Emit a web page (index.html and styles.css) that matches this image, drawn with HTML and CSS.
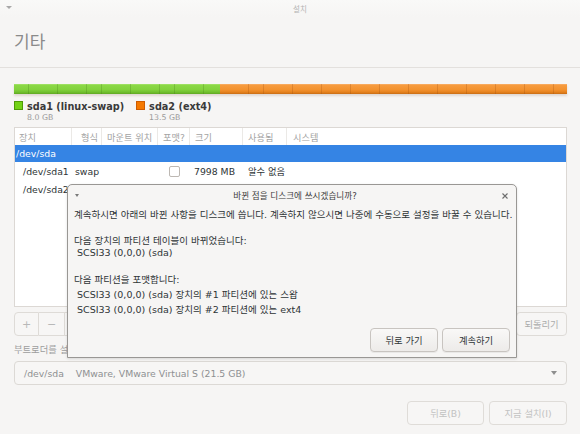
FILE: index.html
```html
<!DOCTYPE html>
<html lang="ko">
<head>
<meta charset="utf-8">
<link rel="stylesheet" href="styles.css">
</head>
<body>
<div class="window">
  <div class="titlebar"><span class="wtri"></span><span class="wtitle">설치</span></div>
  <div class="header"><h1 class="heading">기타</h1></div>
  <div class="content">
    <div class="pbar">
      <div class="seg swap"></div>
      <div class="seg ext4"></div>
    </div>
    <div class="legend">
      <div class="litem">
        <span class="sq green"></span>
        <div class="ltext"><div class="lname">sda1 (linux-swap)</div><div class="lsize">8.0 GB</div></div>
      </div>
      <div class="litem">
        <span class="sq orange"></span>
        <div class="ltext"><div class="lname">sda2 (ext4)</div><div class="lsize">13.5 GB</div></div>
      </div>
    </div>
    <div class="table">
      <div class="row head">
        <div class="c c1 h">장치</div>
        <div class="c c2 h">형식</div>
        <div class="c c3 h">마운트 위치</div>
        <div class="c c4 h">포맷?</div>
        <div class="c c5 h">크기</div>
        <div class="c c6 h">사용됨</div>
        <div class="c c7 h last">시스템</div>
      </div>
      <div class="row sel"><div class="c dev0">/dev/sda</div></div>
      <div class="row data">
        <div class="c c1 dev">/dev/sda1</div>
        <div class="c c2 d2">swap</div>
        <div class="c c3"></div>
        <div class="c c4 d4"><span class="chk"></span></div>
        <div class="c c5 d5">7998 MB</div>
        <div class="c c6 d6">알수 없음</div>
        <div class="c c7"></div>
      </div>
      <div class="row data">
        <div class="c c1 dev">/dev/sda2</div>
      </div>
    </div>
    <div class="toolbar">
      <div class="linked">
        <div class="tbtn plus">+</div>
        <div class="tbtn minus">−</div>
        <div class="tbtn change"></div>
      </div>
      <div class="spacer"></div>
      <div class="tbtn revert">되돌리기</div>
    </div>
    <div class="bootlabel">부트로더를 설</div>
    <div class="combo">
      <span class="cdev">/dev/sda</span><span class="cname">VMware, VMware Virtual S (21.5 GB)</span>
      <span class="carrow"></span>
    </div>
    <div class="footer">
      <div class="fbtn back">뒤로(B)</div>
      <div class="fbtn install">지금 설치(I)</div>
    </div>
  </div>
</div>

<div class="dialog">
  <div class="dtitlebar">
    <span class="dtri"></span>
    <span class="dtitle">바뀐 점을 디스크에 쓰시겠습니까?</span>
    <svg class="dclose" width="6" height="6" viewBox="0 0 6 6"><path d="M0.5 0.5L5.5 5.5M5.5 0.5L0.5 5.5" stroke="#6d6d6d" stroke-width="1.1" fill="none"/></svg>
  </div>
  <div class="dbody">
    <p class="p1">계속하시면 아래의 바뀐 사항을 디스크에 씁니다. 계속하지 않으시면 나중에 수동으로 설정을 바꿀 수 있습니다.</p>
    <p class="p2">다음 장치의 파티션 테이블이 바뀌었습니다:<br>&nbsp;SCSI33 (0,0,0) (sda)</p>
    <p class="p3">다음 파티션을 포맷합니다:<br>&nbsp;SCSI33 (0,0,0) (sda) 장치의 #1 파티션에 있는 스왑<br>&nbsp;SCSI33 (0,0,0) (sda) 장치의 #2 파티션에 있는 ext4</p>
  </div>
  <div class="dactions">
    <div class="dbtn">뒤로 가기</div>
    <div class="dbtn">계속하기</div>
  </div>
</div>
</body>
</html>
```

FILE: styles.css
```css
* { box-sizing: border-box; }
html, body {
  margin: 0;
  padding: 0;
  width: 580px;
  height: 434px;
  overflow: hidden;
  background: #f6f5f4;
  font-family: "DejaVu Sans", "Noto Sans CJK KR", sans-serif;
  color: #2e3436;
}
.window {
  width: 580px;
  height: 434px;
  display: flex;
  flex-direction: column;
}
.titlebar {
  height: 17px;
  display: flex;
  align-items: center;
  position: relative;
  background: linear-gradient(#f9f9f8, #f6f5f4);
}
.wtri {
  width: 0; height: 0;
  margin-left: 6px;
  margin-top: -2px;
  border-left: 3px solid transparent;
  border-right: 3px solid transparent;
  border-top: 3px solid #a8a8a8;
}
.wtitle {
  flex: 1;
  text-align: center;
  padding-left: 8px;
  font-size: 7.5px;
  color: #b3b3b3;
  margin-top: -1px;
}
.header {
  height: 51px;
  border-bottom: 1px solid #e3e0dd;
  padding: 14px 0 0 14px;
}
.heading {
  margin: 0;
  font-size: 17px;
  line-height: 20px;
  font-weight: normal;
  color: #8a8a8a;
  font-family: "Noto Sans CJK KR", sans-serif;
}
.content {
  padding: 0 13px 0 14px;
  display: flex;
  flex-direction: column;
}
.pbar {
  margin-top: 16px;
  height: 10px;
  display: flex;
  box-shadow: 0 2px 2px rgba(120, 90, 60, 0.18);
}
.seg { height: 10px; }
.swap {
  width: 206px;
  background:
    repeating-linear-gradient(90deg, transparent 0 14px, rgba(60, 110, 20, 0.25) 14px 14.6px),
    linear-gradient(#a6e46c 0, #8bd846 15%, #82d23d 55%, #72c22f 80%, #5fa823 100%);
}
.ext4 {
  flex: 1;
  background:
    repeating-linear-gradient(90deg, transparent 0 14px, rgba(150, 70, 10, 0.25) 14px 14.5px),
    linear-gradient(#f9b06a 0, #f69b3e 15%, #f3922f 55%, #e7831e 80%, #c86c14 100%);
}
.legend {
  margin-top: 6.5px;
  display: flex;
  gap: 12px;
  height: 22px;
}
.litem { display: flex; gap: 4px; }
.sq {
  width: 9px; height: 9px;
  margin-top: 0.5px;
  border: 1px solid;
  flex: none;
}
.green { background: #73d216; border-color: #4e9a06; }
.orange { background: #f57900; border-color: #ce5c00; }
.lname {
  font-size: 9.7px;
  font-weight: bold;
  line-height: 11px;
  color: #3a3a3a;
  white-space: nowrap;
}
.lsize {
  font-size: 7.8px;
  line-height: 11px;
  color: #9a9a9a;
}
.table {
  margin-top: 4.5px;
  height: 180px;
  background: #fff;
  border: 1px solid #dcd8d4;
}
.row {
  display: grid;
  grid-template-columns: 57px 30px 56px 32px 53px 44px 1fr;
  align-items: center;
  font-size: 9.3px;
  white-space: nowrap;
}
.head { height: 17px; }
.c { height: 100%; display: flex; align-items: center; }
.h {
  color: #a3a3a3;
  font-size: 9.2px;
  border-right: 1px solid #ebe9e6;
  padding-left: 4px;
}
.head .c2 { padding-left: 9px; }
.head .c3 { padding-left: 5px; }
.head .c4 { padding-left: 5px; }
.head .c5 { padding-left: 5px; }
.head .c6 { padding-left: 5px; }
.head .c7 { padding-left: 6px; }
.h.last { border-right: none; }
.sel {
  height: 17px;
  background: #3584e4;
  color: #fff;
  display: flex;
}
.dev0 { padding-left: 1px; }
.data { height: 18px; }
.dev { padding-left: 8px; }
.d2 { padding-left: 3px; }
.d4 { justify-content: center; padding-left: 1px; }
.d5 { padding-left: 4px; }
.d6 { padding-left: 5px; }
.chk {
  width: 11px; height: 11px;
  border: 1px solid #bdb8b3;
  border-radius: 2px;
  background: #fff;
}
.toolbar {
  margin-top: 5px;
  height: 24px;
  display: flex;
}
.linked { display: flex; }
.spacer { flex: 1; }
.tbtn {
  height: 24px;
  border: 1px solid #dedbd7;
  background: #f7f6f5;
  color: #b8b8b8;
  font-size: 9.3px;
  display: flex;
  align-items: center;
  justify-content: center;
}
.plus { width: 25px; border-radius: 4px 0 0 4px; font-size: 11px; }
.minus { width: 26px; border-left: none; font-size: 11px; }
.change { width: 50px; border-left: none; border-radius: 0 4px 4px 0; }
.revert { width: 51px; border-radius: 4px; color: #ababab; }
.bootlabel {
  margin-top: 8px;
  font-size: 9.3px;
  line-height: 12px;
  color: #9d9d9d;
}
.combo {
  margin-top: 5px;
  height: 24px;
  border: 1px solid #dcd9d5;
  border-radius: 4px;
  background: #f7f6f5;
  display: flex;
  align-items: center;
  padding-left: 9px;
  font-size: 9.3px;
  color: #8e9092;
  white-space: nowrap;
}
.cdev { margin-right: 12px; }
.cname { flex: 1; }
.carrow {
  width: 0; height: 0;
  margin-right: 9px;
  border-left: 3.5px solid transparent;
  border-right: 3.5px solid transparent;
  border-top: 4px solid #8e8e8e;
}
.footer {
  margin-top: 16px;
  display: flex;
  justify-content: flex-end;
  gap: 5px;
}
.fbtn {
  height: 24px;
  border: 1px solid #dfdcd8;
  border-radius: 4px;
  background: #f7f6f5;
  color: #c2c2c2;
  font-size: 9.3px;
  display: flex;
  align-items: center;
  justify-content: center;
}
.back { width: 77px; }
.install { width: 78px; }

/* dialog overlay */
.dialog {
  position: absolute;
  left: 67px;
  top: 184px;
  width: 450px;
  height: 174px;
  background: #f6f5f4;
  border: 1px solid #999794;
  border-radius: 5px 5px 0 0;
  display: flex;
  flex-direction: column;
  box-shadow: 0 1px 3px rgba(0,0,0,0.12);
}
.dtitlebar {
  height: 19px;
  display: flex;
  align-items: center;
  position: relative;
}
.dtri {
  width: 0; height: 0;
  margin-left: 7px;
  margin-top: 1px;
  border-left: 2.5px solid transparent;
  border-right: 2.5px solid transparent;
  border-top: 3px solid #7a7a7a;
}
.dtitle {
  flex: 1;
  text-align: center;
  padding-right: 5px;
  font-size: 8.6px;
  color: #3c3c3c;
  margin-top: 1px;
}
.dclose {
  position: absolute;
  right: 8px;
  top: 8px;
}
.dbody {
  padding: 5px 0 0 6px;
  font-size: 9.5px;
  white-space: nowrap;
}
.dbody p { margin: 0; }
.p1 { line-height: 12px; }
.p2 { line-height: 12px; margin-top: 14px !important; }
.p3 { line-height: 15px; margin-top: 13px !important; }
.dactions {
  margin-top: auto;
  padding: 0 6px 5px 0;
  display: flex;
  justify-content: flex-end;
  gap: 4px;
}
.dbtn {
  width: 68px;
  height: 24px;
  border: 1px solid #c8c4c0;
  border-radius: 4px;
  background: linear-gradient(#f9f8f7, #edebe9);
  box-shadow: 0 1px 0 rgba(0,0,0,0.05);
  font-size: 9.3px;
  color: #2e3436;
  display: flex;
  align-items: center;
  justify-content: center;
}
```
